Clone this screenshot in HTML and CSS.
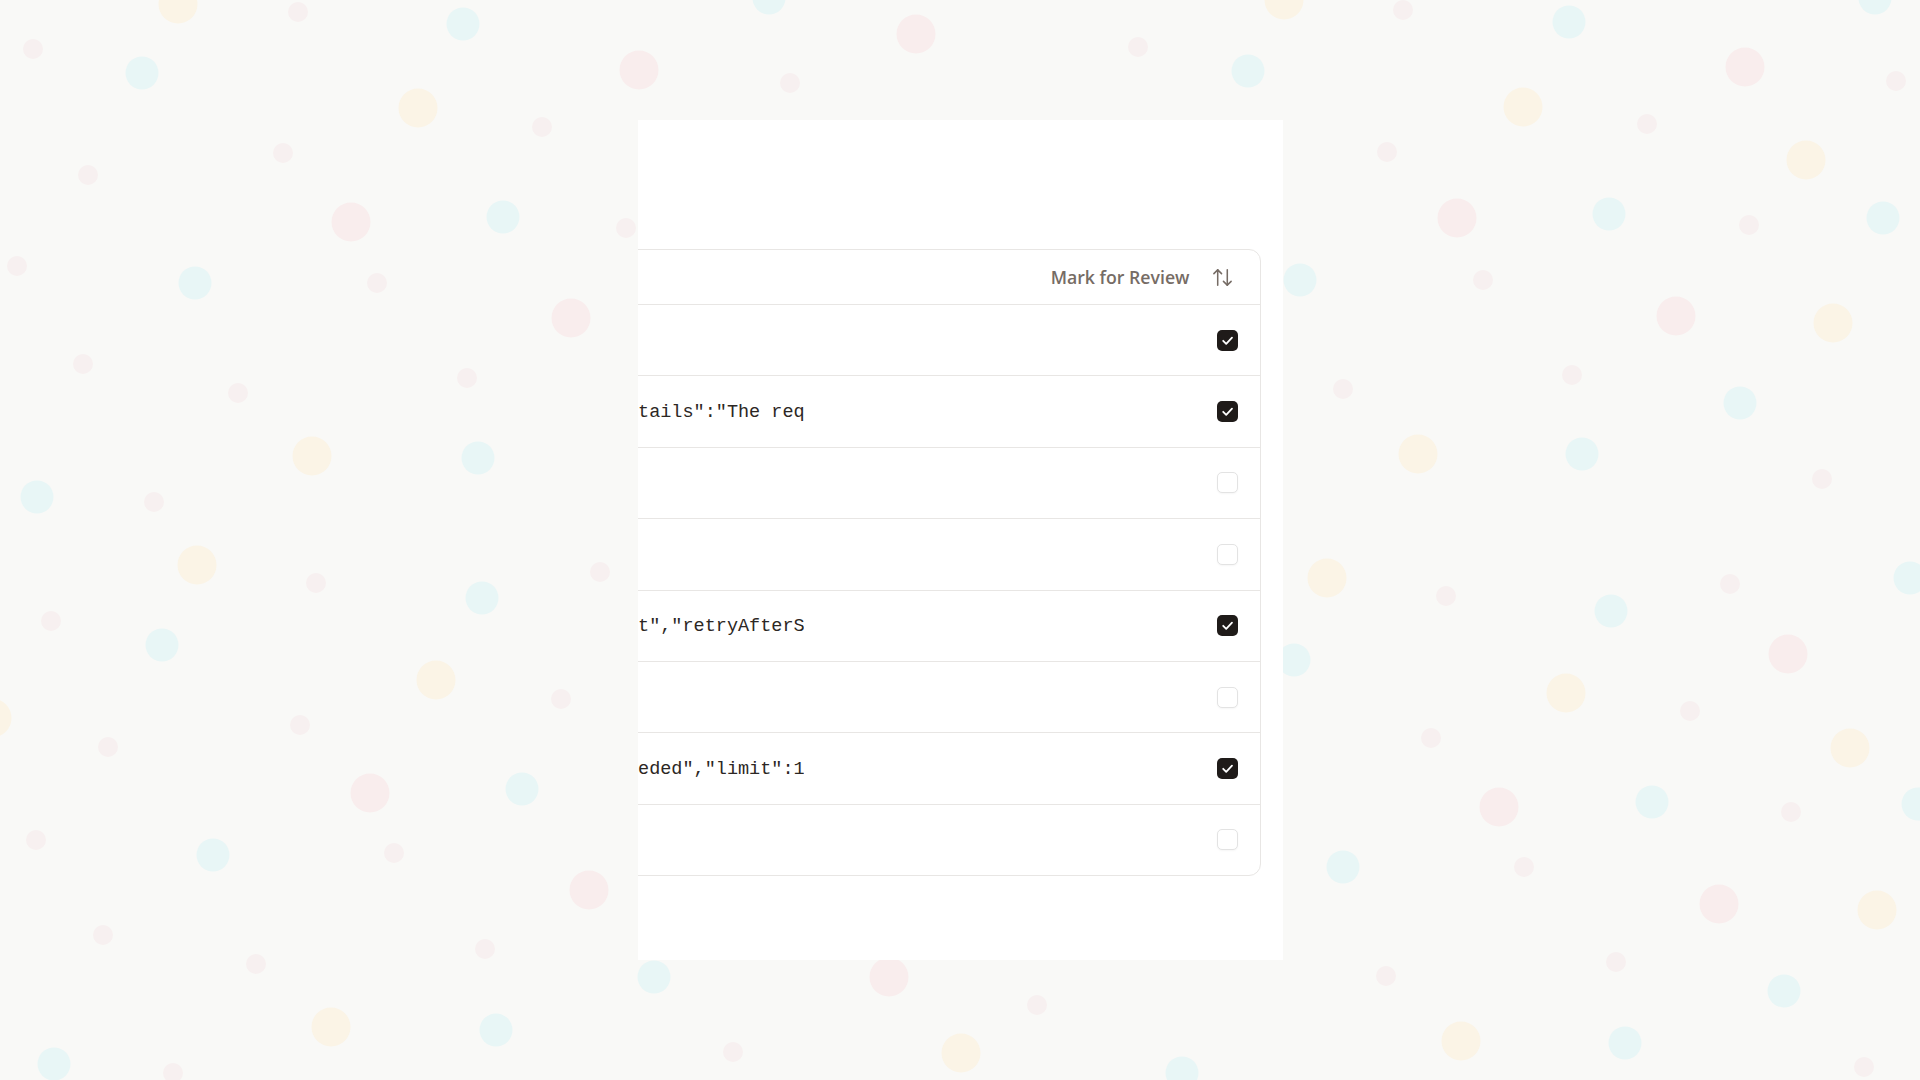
FILE: index.html
```html
<!DOCTYPE html>
<html lang="en">
<head>
<meta charset="utf-8">
<title>Mark for Review</title>
<link rel="stylesheet" href="styles.css">
</head>
<body>
<div class="dots" aria-hidden="true">
<svg width="1920" height="1080" viewBox="0 0 1920 1080">
<g class="y">
<circle cx="178" cy="4" r="19.5"/><circle cx="418" cy="108" r="19.5"/><circle cx="312" cy="456" r="19.5"/><circle cx="197" cy="565" r="19.5"/><circle cx="436" cy="680" r="19.5"/><circle cx="-8" cy="718" r="19.5"/><circle cx="331" cy="1027" r="19.5"/><circle cx="961" cy="1053" r="19.5"/><circle cx="1284" cy="0" r="19.5"/><circle cx="1523" cy="107" r="19.5"/><circle cx="1806" cy="160" r="19.5"/><circle cx="1833" cy="323" r="19.5"/><circle cx="1418" cy="454" r="19.5"/><circle cx="1327" cy="578" r="19.5"/><circle cx="1566" cy="693" r="19.5"/><circle cx="1850" cy="748" r="19.5"/><circle cx="1877" cy="910" r="19.5"/><circle cx="1461" cy="1041" r="19.5"/>
</g>
<g class="p">
<circle cx="639" cy="70" r="19.5"/><circle cx="351" cy="222" r="19.5"/><circle cx="571" cy="318" r="19.5"/><circle cx="370" cy="793" r="19.5"/><circle cx="589" cy="890" r="19.5"/><circle cx="916" cy="34" r="19.5"/><circle cx="1745" cy="67" r="19.5"/><circle cx="1457" cy="218" r="19.5"/><circle cx="1676" cy="316" r="19.5"/><circle cx="1788" cy="654" r="19.5"/><circle cx="1499" cy="807" r="19.5"/><circle cx="1719" cy="904" r="19.5"/><circle cx="889" cy="977" r="19.5"/>
</g>
<g class="c">
<circle cx="463" cy="24" r="16.5"/><circle cx="142" cy="73" r="16.5"/><circle cx="503" cy="217" r="16.5"/><circle cx="195" cy="283" r="16.5"/><circle cx="478" cy="458" r="16.5"/><circle cx="37" cy="497" r="16.5"/><circle cx="482" cy="598" r="16.5"/><circle cx="162" cy="645" r="16.5"/><circle cx="522" cy="789" r="16.5"/><circle cx="213" cy="855" r="16.5"/><circle cx="654" cy="977" r="16.5"/><circle cx="496" cy="1030" r="16.5"/><circle cx="54" cy="1064" r="16.5"/><circle cx="1182" cy="1073" r="16.5"/><circle cx="769" cy="-2" r="16.5"/><circle cx="1248" cy="71" r="16.5"/><circle cx="1569" cy="22" r="16.5"/><circle cx="1875" cy="-2" r="16.5"/><circle cx="1300" cy="280" r="16.5"/><circle cx="1609" cy="214" r="16.5"/><circle cx="1883" cy="218" r="16.5"/><circle cx="1740" cy="403" r="16.5"/><circle cx="1582" cy="454" r="16.5"/><circle cx="1611" cy="611" r="16.5"/><circle cx="1910" cy="578" r="16.5"/><circle cx="1294" cy="660" r="16.5"/><circle cx="1652" cy="802" r="16.5"/><circle cx="1918" cy="804" r="16.5"/><circle cx="1343" cy="867" r="16.5"/><circle cx="1784" cy="991" r="16.5"/><circle cx="1625" cy="1043" r="16.5"/>
</g>
<g class="s">
<circle cx="298" cy="12" r="10"/><circle cx="33" cy="49" r="10"/><circle cx="790" cy="83" r="10"/><circle cx="542" cy="127" r="10"/><circle cx="283" cy="153" r="10"/><circle cx="88" cy="175" r="10"/><circle cx="17" cy="266" r="10"/><circle cx="377" cy="283" r="10"/><circle cx="83" cy="364" r="10"/><circle cx="238" cy="393" r="10"/><circle cx="467" cy="378" r="10"/><circle cx="154" cy="502" r="10"/><circle cx="316" cy="583" r="10"/><circle cx="600" cy="572" r="10"/><circle cx="51" cy="621" r="10"/><circle cx="561" cy="699" r="10"/><circle cx="108" cy="747" r="10"/><circle cx="300" cy="725" r="10"/><circle cx="36" cy="840" r="10"/><circle cx="394" cy="853" r="10"/><circle cx="103" cy="935" r="10"/><circle cx="256" cy="964" r="10"/><circle cx="485" cy="949" r="10"/><circle cx="173" cy="1073" r="10"/><circle cx="733" cy="1052" r="10"/><circle cx="1037" cy="1005" r="10"/><circle cx="1138" cy="47" r="10"/><circle cx="1403" cy="10" r="10"/><circle cx="1896" cy="81" r="10"/><circle cx="1387" cy="152" r="10"/><circle cx="1647" cy="124" r="10"/><circle cx="1749" cy="225" r="10"/><circle cx="1483" cy="280" r="10"/><circle cx="1572" cy="375" r="10"/><circle cx="1343" cy="389" r="10"/><circle cx="1822" cy="479" r="10"/><circle cx="1446" cy="596" r="10"/><circle cx="1730" cy="584" r="10"/><circle cx="1690" cy="711" r="10"/><circle cx="1431" cy="738" r="10"/><circle cx="1791" cy="812" r="10"/><circle cx="1524" cy="867" r="10"/><circle cx="1616" cy="962" r="10"/><circle cx="1386" cy="976" r="10"/><circle cx="1864" cy="1067" r="10"/><circle cx="626" cy="228" r="10"/>
</g>
</svg>
</div>

<main class="stage">
  <section class="card">
    <div class="table">
      <div class="row head">
        <div class="cell body-col">Response Body</div>
        <div class="cell fill"></div>
        <div class="cell review-head">
          <span>Mark for Review</span>
          <svg class="sort" viewBox="0 0 24 24" width="23" height="23" fill="none" stroke="currentColor" stroke-width="1.6" stroke-linecap="round" stroke-linejoin="round"><path d="m21 16-4 4-4-4"/><path d="M17 20V4"/><path d="m3 8 4-4 4 4"/><path d="M7 4v16"/></svg>
        </div>
      </div>

      <div class="row">
        <div class="cell body-col mono">{"status":200,"ok":true}</div>
        <div class="cell fill"></div>
        <div class="cell review"><span class="box checked"><svg viewBox="0 0 21 21" width="21" height="21"><polyline points="6.2 10.8 9.2 13.8 15 7.6" fill="none" stroke="#fff" stroke-width="1.8" stroke-linecap="round" stroke-linejoin="round"/></svg></span></div>
      </div>

      <div class="row">
        <div class="cell body-col mono">{"status":400,"error":"Bad Request","details":"The request body failed validation"}</div>
        <div class="cell fill"></div>
        <div class="cell review"><span class="box checked"><svg viewBox="0 0 21 21" width="21" height="21"><polyline points="6.2 10.8 9.2 13.8 15 7.6" fill="none" stroke="#fff" stroke-width="1.8" stroke-linecap="round" stroke-linejoin="round"/></svg></span></div>
      </div>

      <div class="row">
        <div class="cell body-col mono">{"status":201,"id":"a91f"}</div>
        <div class="cell fill"></div>
        <div class="cell review"><span class="box"></span></div>
      </div>

      <div class="row">
        <div class="cell body-col mono">{"status":204}</div>
        <div class="cell fill"></div>
        <div class="cell review"><span class="box"></span></div>
      </div>

      <div class="row">
        <div class="cell body-col mono">{"status":429,"error":"Hourly rate limit","retryAfterSeconds":60}</div>
        <div class="cell fill"></div>
        <div class="cell review"><span class="box checked"><svg viewBox="0 0 21 21" width="21" height="21"><polyline points="6.2 10.8 9.2 13.8 15 7.6" fill="none" stroke="#fff" stroke-width="1.8" stroke-linecap="round" stroke-linejoin="round"/></svg></span></div>
      </div>

      <div class="row">
        <div class="cell body-col mono">{"status":200,"ok":true}</div>
        <div class="cell fill"></div>
        <div class="cell review"><span class="box"></span></div>
      </div>

      <div class="row">
        <div class="cell body-col mono">{"status":429,"error":"Quota limit exceeded","limit":1000,"window":"1h"}</div>
        <div class="cell fill"></div>
        <div class="cell review"><span class="box checked"><svg viewBox="0 0 21 21" width="21" height="21"><polyline points="6.2 10.8 9.2 13.8 15 7.6" fill="none" stroke="#fff" stroke-width="1.8" stroke-linecap="round" stroke-linejoin="round"/></svg></span></div>
      </div>

      <div class="row last">
        <div class="cell body-col mono">{"status":200,"items":[]}</div>
        <div class="cell fill"></div>
        <div class="cell review"><span class="box"></span></div>
      </div>
    </div>
  </section>
</main>
</body>
</html>
```

FILE: styles.css
```css
* { box-sizing: border-box; }

html, body {
  margin: 0;
  padding: 0;
  width: 100%;
  height: 100%;
}

body {
  background: #f9f9f7;
  font-family: "Open Sans", "Liberation Sans", sans-serif;
  overflow: hidden;
  position: relative;
}

.dots {
  position: absolute;
  inset: 0;
  z-index: 0;
}
.dots svg { display: block; }
.dots .y circle { fill: #fbf4e6; }
.dots .p circle { fill: #f9eded; }
.dots .c circle { fill: #e8f6f6; }
.dots .s circle { fill: #f7f0f0; }

.stage {
  position: relative;
  z-index: 1;
  height: 100vh;
  display: flex;
  align-items: center;
  justify-content: center;
}

.card {
  width: 645px;
  height: 840px;
  background: #ffffff;
  padding: 129px 22px 0 0;
  overflow: hidden;
}

.table {
  width: 1100px;
  margin-left: -477px;
  border: 1px solid #e8e6e4;
  border-radius: 12px;
  background: #ffffff;
}

.row {
  display: flex;
  align-items: center;
  height: 71.375px;
  padding-left: 43.6px;
  border-bottom: 1px solid #e8e6e4;
}
.row.head { height: 55px; }
.row.last { border-bottom: 0; height: 70.4px; }

.cell { flex: none; }
.fill { flex: 1 1 auto; }

.body-col {
  width: 599.4px;
  overflow: hidden;
  white-space: nowrap;
  color: #7b716a;
  font-weight: 600;
  font-size: 17.7px;
}

.mono {
  font-family: "Liberation Mono", "DejaVu Sans Mono", monospace;
  font-size: 18.5px;
  font-weight: 400;
  color: #2c2724;
  padding-top: 2px;
}

.review-head {
  display: flex;
  align-items: center;
  gap: 21px;
  padding-right: 26px;
  color: #766c65;
  font-size: 17.7px;
  font-weight: 600;
}
.sort { display: block; color: #766c65; }

.review {
  padding-right: 22px;
  display: flex;
  align-items: center;
}

.box {
  display: block;
  width: 21px;
  height: 21px;
  border-radius: 5px;
  border: 1px solid #e3e3e3;
  background: #ffffff;
  box-shadow: 0 1px 2px rgba(0, 0, 0, 0.04);
}
.box.checked {
  border: 0;
  background: #1f1b19;
  box-shadow: none;
}
.box svg { display: block; }
```
